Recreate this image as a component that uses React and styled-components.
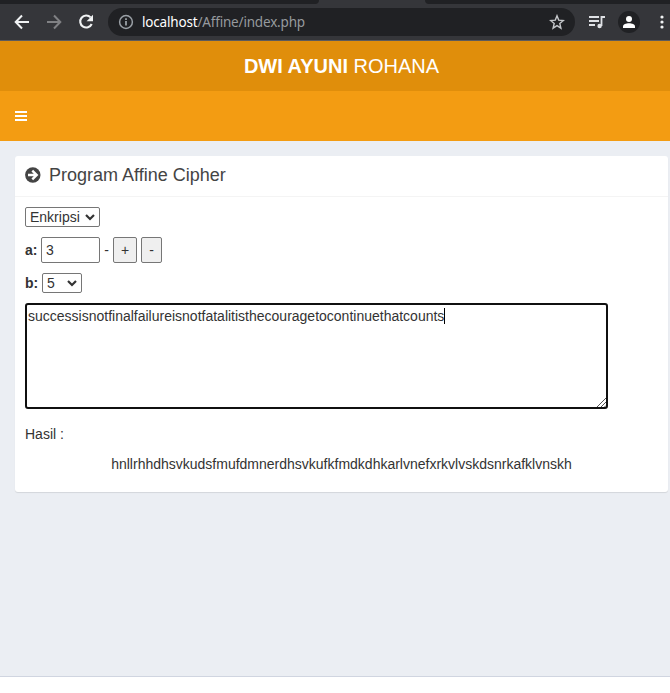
import React from 'react';
import styled, { createGlobalStyle } from 'styled-components';

const GlobalStyle = createGlobalStyle`
  * { box-sizing: border-box; }
  html, body { margin: 0; background: #fff; }
  body { font: 14px/20px "Liberation Sans", Arial, sans-serif; color: #333; overflow: hidden; }
`;

const Page = styled.div`
  width: 670px;
  height: 693px;
  display: flex;
  flex-direction: column;
`;

const TabStrip = styled.div`
  height: 4px;
  flex: none;
  display: flex;
  justify-content: space-between;
  background: #35363a;
`;
const InactiveTabs = styled.div`
  width: ${(p) => p.$width}px;
  background: #202124;
  border-radius: ${(p) => (p.$side === 'left' ? '0 0 4px 0' : '0 0 0 4px')};
`;

const Toolbar = styled.div`
  height: 37px;
  flex: none;
  display: flex;
  align-items: center;
  padding: 0 0 0 14px;
  background: #35363a;
  border-bottom: 1px solid #5b5a5c;
`;
const NavButtons = styled.div`
  display: flex;
  gap: 16px;
  width: 94px;
  svg { display: block; flex: none; }
`;
const AddressBar = styled.div`
  width: 467px;
  height: 28px;
  border-radius: 14px;
  background: #202124;
  display: flex;
  align-items: center;
  padding: 0 10px;
  svg { flex: none; }
`;
const Url = styled.span`
  flex: 1;
  margin-left: 8px;
  font: 13.5px/20px "Noto Sans", sans-serif;
  letter-spacing: -0.18px;
  color: #969a9e;
  b { font-weight: 400; color: #fff; }
`;
const Tools = styled.div`
  flex: 1;
  display: flex;
  align-items: center;
  padding-left: 13px;
  svg { flex: none; }
`;
const Avatar = styled.div`
  width: 22px;
  height: 22px;
  flex: none;
  border-radius: 50%;
  background: #202124;
  margin: 0 20px 0 12px;
  display: flex;
  align-items: center;
  justify-content: center;
`;

const Brand = styled.header`
  height: 50px;
  flex: none;
  background: #e08e0b;
  color: #fff;
  font-size: 20px;
  line-height: 50px;
  text-align: center;
  padding-left: 13px;
`;
const Navbar = styled.nav`
  height: 50px;
  flex: none;
  background: #f39c12;
  display: flex;
  align-items: center;
  padding-left: 15px;
`;
const Content = styled.main`
  height: 536px;
  flex: none;
  background: #ebeef3;
  border-bottom: 1px solid #d0d5e0;
  padding: 15px 2px 0 15px;
`;
const Box = styled.section`
  height: 336px;
  background: #fff;
  border-radius: 3px;
  box-shadow: 0 1px 1px rgba(0, 0, 0, 0.1);
`;
const BoxHeader = styled.div`
  height: 41px;
  border-bottom: 1px solid #f4f4f4;
  padding: 0 10px 2px;
  display: flex;
  align-items: center;
`;
const Title = styled.h3`
  margin: 0 0 0 8px;
  font-size: 18px;
  line-height: 20px;
  font-weight: 400;
  color: #444;
`;
const BoxBody = styled.div`
  padding: 10px;
`;
const Row = styled.div`
  display: flex;
  align-items: center;
  height: ${(p) => p.$height}px;
  margin-bottom: 10px;
`;
const Label = styled.label`
  width: ${(p) => p.$width}px;
  font-weight: 700;
`;
const SelectBox = styled.div`
  width: ${(p) => p.$width}px;
  height: 20px;
  border: 1px solid #767676;
  border-radius: 2px;
  background: #fff;
  padding: 0 4px;
  display: flex;
  align-items: center;
  justify-content: space-between;
`;
const NumberInput = styled.input`
  width: 59px;
  height: 26px;
  border: 1px solid #767676;
  border-radius: 2px;
  padding: 1px 4px;
  margin: 0;
  font: inherit;
  color: inherit;
  outline: none;
`;
const Dash = styled.span`
  width: 13px;
  text-align: center;
`;
const StepButton = styled.button`
  width: ${(p) => p.$width}px;
  height: 26px;
  margin-right: 4px;
  padding: 0;
  border: 1px solid #767676;
  border-radius: 2px;
  background: #efefef;
  font: inherit;
  color: inherit;
`;
const TextArea = styled.div`
  width: 583px;
  height: 106px;
  border: 2px solid #101010;
  border-radius: 3px;
  display: flex;
  justify-content: space-between;
  padding: 1px 0 0 1px;
  svg { align-self: flex-end; }
`;
const Typed = styled.span`
  height: 20px;
  display: flex;
  align-items: center;
`;
const Caret = styled.i`
  width: 1px;
  height: 16px;
  background: #000;
`;
const ResultLabel = styled.p`
  margin: 15px 0 10px;
`;
const Result = styled.p`
  margin: 0;
  text-align: center;
`;

function Select({ value, width }) {
  return (
    <SelectBox $width={width}>
      {value}
      <svg width="10" height="8" viewBox="0 0 10 8" fill="none" stroke="#333" strokeWidth="2.2">
        <path d="M1 2l4 4 4-4" />
      </svg>
    </SelectBox>
  );
}

function BrowserToolbar() {
  return (
    <Toolbar>
      <NavButtons>
        <svg width="16" height="16" fill="none" stroke="#f1f3f4" strokeWidth="2">
          <path d="M15 8H2M8 1.5L1.7 8 8 14.5" />
        </svg>
        <svg width="16" height="16" fill="none" stroke="#808184" strokeWidth="2">
          <path d="M1 8h13M8 1.5L14.3 8 8 14.5" />
        </svg>
        <svg width="16" height="16">
          <path d="M12.6 3.4A6 6 0 1 0 13.7 10" fill="none" stroke="#f1f3f4" strokeWidth="2.1" />
          <path d="M15 .8v6.4H8.6z" fill="#f1f3f4" />
        </svg>
      </NavButtons>
      <AddressBar>
        <svg width="16" height="16" fill="none" stroke="#9aa0a6" strokeWidth="1.5">
          <circle cx="8" cy="8" r="6.4" />
          <path d="M8 7v4.5M8 4.3v1.6" strokeWidth="1.8" />
        </svg>
        <Url><b>localhost</b>/Affine/index.php</Url>
        <svg width="16" height="16" fill="none" stroke="#c4c7ca" strokeWidth="1.4">
          <path d="M8 1.8l1.7 4.3 4.7.4-3.6 3 1.1 4.6L8 11.6l-3.9 2.5 1.1-4.6-3.6-3 4.7-.4z" />
        </svg>
      </AddressBar>
      <Tools>
        <svg width="18" height="16" fill="none" stroke="#dfe1e5" strokeWidth="1.8">
          <path d="M1 3h10M1 7h10M1 11h6M13.5 12V3H17" />
          <circle cx="11.6" cy="12" r="2.2" fill="#dfe1e5" stroke="none" />
        </svg>
        <Avatar>
          <svg width="14" height="14" fill="#fff">
            <circle cx="7" cy="4" r="3" />
            <path d="M1 13v-1.5C1 9.2 4 8.3 7 8.3s6 .9 6 3.2V13z" />
          </svg>
        </Avatar>
        <svg width="4" height="14" fill="#f1f3f4">
          <circle cx="2" cy="2" r="1.6" />
          <circle cx="2" cy="7" r="1.6" />
          <circle cx="2" cy="12" r="1.6" />
        </svg>
      </Tools>
    </Toolbar>
  );
}

export default function App() {
  return (
    <Page>
      <GlobalStyle />
      <TabStrip>
        <InactiveTabs $width={319} $side="left" />
        <InactiveTabs $width={245} $side="right" />
      </TabStrip>
      <BrowserToolbar />
      <Brand><b>DWI AYUNI</b> ROHANA</Brand>
      <Navbar>
        <svg width="12" height="10" fill="#fff" shapeRendering="crispEdges">
          <path d="M0 0h12v2H0zM0 4h12v2H0zM0 8h12v2H0z" />
        </svg>
      </Navbar>
      <Content>
        <Box>
          <BoxHeader>
            <svg width="16" height="16" viewBox="0 0 16 16">
              <circle cx="7.8" cy="8" r="7.7" fill="#444" />
              <path d="M3 8h8M7.3 3.6L11.7 8l-4.4 4.4" fill="none" stroke="#fff" strokeWidth="2.4" />
            </svg>
            <Title>Program Affine Cipher</Title>
          </BoxHeader>
          <BoxBody>
            <Row $height={20}><Select value="Enkripsi" width={75} /></Row>
            <Row $height={26}>
              <Label $width={16}>a:</Label>
              <NumberInput defaultValue="3" />
              <Dash>-</Dash>
              <StepButton $width={24}>+</StepButton>
              <StepButton $width={21}>-</StepButton>
            </Row>
            <Row $height={20}>
              <Label $width={17}>b:</Label>
              <Select value="5" width={40} />
            </Row>
            <TextArea>
              <Typed>
                successisnotfinalfailureisnotfatalitisthecouragetocontinuethatcounts
                <Caret />
              </Typed>
              <svg width="9" height="9" stroke="#555" strokeWidth="1">
                <path d="M0 9L9 0M4 9l5-5M7.5 9L9 7.5" />
              </svg>
            </TextArea>
            <ResultLabel>Hasil :</ResultLabel>
            <Result>hnllrhhdhsvkudsfmufdmnerdhsvkufkfmdkdhkarlvnefxrkvlvskdsnrkafklvnskh</Result>
          </BoxBody>
        </Box>
      </Content>
    </Page>
  );
}
